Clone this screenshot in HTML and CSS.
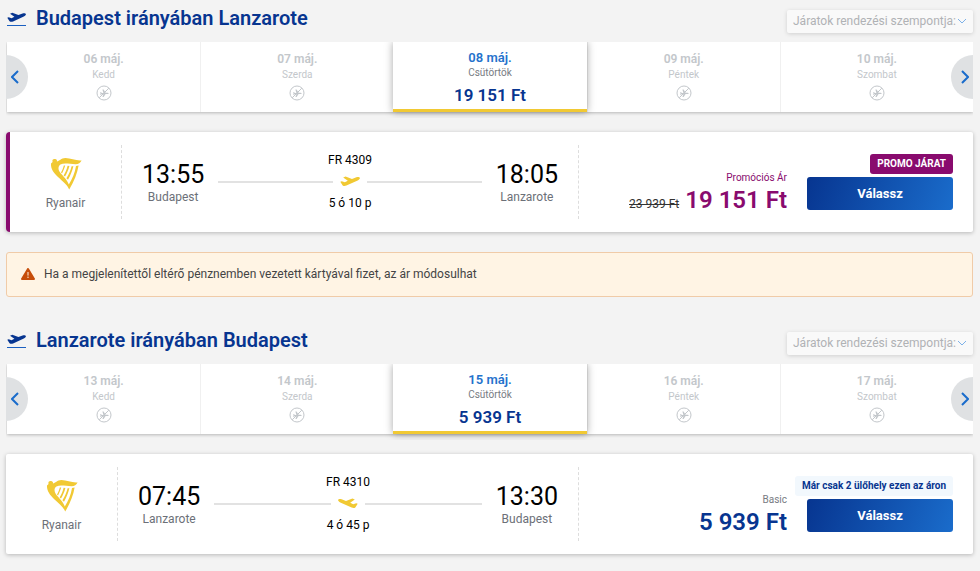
FILE: index.html
```
<!DOCTYPE html>
<html lang="hu">
<head>
<meta charset="UTF-8">
<meta name="viewport" content="width=device-width, initial-scale=1.0">
<title>Budapest - Lanzarote</title>
<link rel="stylesheet" href="styles.css">
</head>
<body>

<svg width="0" height="0" class="sprite" aria-hidden="true">
  <symbol id="plane" viewBox="0 0 20 12">
    <path d="M0.3 5.8 L1.8 5.2 L4.8 6.3 L7.8 4.8 L3.2 1.4 L5.6 0.6 L12 2.9 L16.4 1.2 C18 0.7 19.6 1 19.9 1.9 C20.1 2.8 19 3.9 17.7 4.5 L6.4 9.6 C5 10.1 3.6 10.2 2.7 9.4 Z"/>
  </symbol>
  <symbol id="harp" viewBox="0 0 32 34">
    <path d="M2.6 5 C1.8 3 3.2 1.6 5 2 C6.8 2.2 7.4 3.6 6.8 4.6 C9.4 4 11 1.2 15.4 1 C21 1 26 4 31.6 3.4 C30.4 5.8 28.6 7.2 25.6 7.2 C20 7.2 14.4 5.6 10.4 7.4 C8 9 8 12.4 9.8 15 C12.4 18.8 17.2 22.4 18.8 27.6 C22.2 22 25 15.6 26 9 L28.6 8.6 C27.4 16.2 24 24.8 19.2 32.6 C17.6 28 12.6 24.4 8 20 C4 16 0.6 12 1 6.4 Z"/>
    <path d="M13.8 8.4 L15.2 8.6 C14.4 11.6 13.4 13.8 12 16.4 L11 15.4 C12.4 13 13.2 11 13.8 8.4 Z M17.6 8.8 L19.4 9 C18.4 13 16.8 16.4 15 19.6 L13.6 18.4 C15.6 15.2 16.8 12.2 17.6 8.8 Z M21.6 9.2 L23.4 9.2 C22.4 13.6 20.4 18.4 18 22.8 L16.4 21.2 C19 17.2 20.6 13.4 21.6 9.2 Z"/>
  </symbol>
  <symbol id="no-flight" viewBox="0 0 16 16">
    <circle cx="8" cy="8" r="7" fill="none" stroke="currentColor"/>
    <path d="M3.2 12.8 L12.8 3.2" stroke="currentColor"/>
    <path d="M4 7.2 L5 7.2 L6 8 L7.4 8 L6.4 4.4 L7.6 4.4 L9.6 7.7 L11.6 7.7 C13 7.8 13 9 11.6 9.1 L9.6 9.1 L7.6 12 L6.4 12 L7.4 9 L6 9 L5 9.8 L4 9.8 L4.6 8.5 Z"/>
  </symbol>
  <symbol id="chevron" viewBox="0 0 8 14">
    <path d="M1 1 L7 7 L1 13" fill="none" stroke="currentColor" stroke-width="2"/>
  </symbol>
</svg>

<main>
  <section class="journey">
    <header class="journey-header">
      <h2>
        <span class="takeoff"><svg><use href="#plane"/></svg></span>
        Budapest irányában Lanzarote
      </h2>
      <div class="sort">
        <select aria-label="Járatok rendezése">
          <option>Járatok rendezési szempontja:</option>
        </select>
        <svg viewBox="0 0 10 6"><path d="M1 1 L5 5 L9 1"/></svg>
      </div>
    </header>

    <div class="dates">
      <button class="day" disabled><b>06 máj.</b><span>Kedd</span><svg><use href="#no-flight"/></svg></button>
      <button class="day" disabled><b>07 máj.</b><span>Szerda</span><svg><use href="#no-flight"/></svg></button>
      <button class="day selected"><b>08 máj.</b><span>Csütörtök</span><strong>19 151 Ft</strong></button>
      <button class="day" disabled><b>09 máj.</b><span>Péntek</span><svg><use href="#no-flight"/></svg></button>
      <button class="day" disabled><b>10 máj.</b><span>Szombat</span><svg><use href="#no-flight"/></svg></button>
      <button class="arrow prev" aria-label="Előző"><svg><use href="#chevron"/></svg></button>
      <button class="arrow next" aria-label="Következő"><svg><use href="#chevron"/></svg></button>
    </div>

    <article class="flight promo">
      <div class="airline">
        <svg><use href="#harp"/></svg>
        <span>Ryanair</span>
      </div>
      <div class="trip">
        <div class="stop"><time>13:55</time><span>Budapest</span></div>
        <div class="route">
          <span>FR 4309</span>
          <div class="track"><svg><use href="#plane"/></svg></div>
          <span>5 ó 10 p</span>
        </div>
        <div class="stop"><time>18:05</time><span>Lanzarote</span></div>
      </div>
      <div class="fare">
        <div class="price">
          <span class="fare-name">Promóciós Ár</span>
          <div class="amount"><del>23 939 Ft</del><strong>19 151 Ft</strong></div>
        </div>
        <div class="action">
          <span class="badge">PROMO JÁRAT</span>
          <button class="select">Válassz</button>
        </div>
      </div>
    </article>
  </section>

  <div class="notice">
    <svg viewBox="0 0 14 12">
      <path class="triangle" d="M7 1 L13 11 L1 11 Z"/>
      <path class="mark" d="M7 4 V7.6 M7 8.6 V10"/>
    </svg>
    <p>Ha a megjelenítettől eltérő pénznemben vezetett kártyával fizet, az ár módosulhat</p>
  </div>

  <section class="journey">
    <header class="journey-header">
      <h2>
        <span class="takeoff"><svg><use href="#plane"/></svg></span>
        Lanzarote irányában Budapest
      </h2>
      <div class="sort">
        <select aria-label="Járatok rendezése">
          <option>Járatok rendezési szempontja:</option>
        </select>
        <svg viewBox="0 0 10 6"><path d="M1 1 L5 5 L9 1"/></svg>
      </div>
    </header>

    <div class="dates">
      <button class="day" disabled><b>13 máj.</b><span>Kedd</span><svg><use href="#no-flight"/></svg></button>
      <button class="day" disabled><b>14 máj.</b><span>Szerda</span><svg><use href="#no-flight"/></svg></button>
      <button class="day selected"><b>15 máj.</b><span>Csütörtök</span><strong>5 939 Ft</strong></button>
      <button class="day" disabled><b>16 máj.</b><span>Péntek</span><svg><use href="#no-flight"/></svg></button>
      <button class="day" disabled><b>17 máj.</b><span>Szombat</span><svg><use href="#no-flight"/></svg></button>
      <button class="arrow prev" aria-label="Előző"><svg><use href="#chevron"/></svg></button>
      <button class="arrow next" aria-label="Következő"><svg><use href="#chevron"/></svg></button>
    </div>

    <article class="flight">
      <div class="airline">
        <svg><use href="#harp"/></svg>
        <span>Ryanair</span>
      </div>
      <div class="trip">
        <div class="stop"><time>07:45</time><span>Lanzarote</span></div>
        <div class="route">
          <span>FR 4310</span>
          <div class="track inbound"><svg><use href="#plane"/></svg></div>
          <span>4 ó 45 p</span>
        </div>
        <div class="stop"><time>13:30</time><span>Budapest</span></div>
      </div>
      <div class="fare">
        <div class="price">
          <span class="fare-name">Basic</span>
          <div class="amount"><strong>5 939 Ft</strong></div>
        </div>
        <div class="action">
          <span class="badge">Már csak 2 ülőhely ezen az áron</span>
          <button class="select">Válassz</button>
        </div>
      </div>
    </article>
  </section>
</main>

</body>
</html>
```
FILE: styles.css
```
* {
  box-sizing: border-box;
}
body {
  margin: 0;
  padding: 0 7px 16px 6px;
  background: #f3f3f3;
  color: #000;
  font-family: Roboto, "Liberation Sans", sans-serif;
  font-size: 12px;
  line-height: 16px;
}
button, select {
  font-family: inherit;
  border: none;
  margin: 0;
}
svg {
  display: block;
  fill: currentColor;
}
.sprite {
  position: absolute;
}

/* Title row */
.journey-header {
  display: flex;
  justify-content: space-between;
  height: 42px;
  margin-left: 1px;
}
h2 {
  display: flex;
  gap: 10px;
  margin: 6px 0 0;
  color: #073590;
  font-size: 20px;
  font-weight: 600;
  line-height: 24px;
}
.takeoff {
  width: 19px;
  height: 20px;
  padding-top: 6px;
  border-bottom: 1px solid #1a5fc0;
}
.takeoff svg {
  width: 19px;
  height: 12px;
}
.sort {
  position: relative;
  height: 23px;
  margin-top: 10px;
  border-radius: 2px;
  background: #f9f9f9;
  box-shadow: 0 1px 4px rgba(0, 0, 0, 0.15);
}
.sort select {
  appearance: none;
  height: 21px;
  padding: 0 17px 0 6px;
  background: none;
  color: #b0b2b5;
  font-size: 12px;
}
.sort svg {
  position: absolute;
  top: 8px;
  right: 6px;
  width: 10px;
  height: 6px;
  fill: none;
  stroke: #7db1e8;
  pointer-events: none;
}

/* Day strip */
.dates {
  position: relative;
  display: grid;
  grid-template-columns: repeat(5, 1fr);
  height: 70px;
  margin-left: 1px;
  background: #fff;
  box-shadow: 0 1px 3px rgba(0, 0, 0, 0.25);
  clip-path: inset(0 0 -6px -1px);
}
.day {
  display: flex;
  flex-direction: column;
  align-items: center;
  padding: 9px 0 0;
  border-left: 1px solid #f0f0f0;
  background: #fff;
  color: #c3c7cb;
  font-size: 10px;
  line-height: 16px;
}
.day b {
  font-size: 12px;
  font-weight: 600;
}
.day svg {
  width: 16px;
  height: 16px;
  margin-top: 2px;
}
.day:first-child {
  border-left: none;
}
.day.selected {
  z-index: 1;
  padding-top: 8px;
  border-left: none;
  border-bottom: 3px solid #f1c933;
  box-shadow: 0 0 8px rgba(0, 0, 0, 0.35);
  color: #777b82;
}
.day.selected b {
  color: #2472cc;
  font-size: 13px;
}
.day.selected span {
  line-height: 14px;
}
.day.selected strong {
  margin-top: 5px;
  color: #073590;
  font-size: 17px;
  font-weight: 600;
  line-height: 20px;
}
.arrow {
  position: absolute;
  top: 13px;
  display: flex;
  align-items: center;
  justify-content: center;
  width: 22px;
  height: 44px;
  padding: 0;
  background: #dfe1e3;
  color: #1a6ccb;
}
.arrow svg {
  width: 8px;
  height: 14px;
}
.prev {
  left: -1px;
  padding-right: 5px;
  border-radius: 0 22px 22px 0;
}
.prev svg {
  transform: scaleX(-1);
}
.next {
  right: 0;
  padding-left: 5px;
  border-radius: 22px 0 0 22px;
}

/* Flight card */
.flight {
  display: grid;
  grid-template-columns: 112px 1fr 394px;
  height: 100px;
  margin-top: 20px;
  padding: 13px 0;
  border-radius: 2px;
  background: #fff;
  box-shadow: 0 1px 4px rgba(0, 0, 0, 0.25);
}
.promo {
  border-left: 4px solid #890b6e;
  border-radius: 4px 2px 2px 4px;
}
.airline {
  display: flex;
  flex-direction: column;
  align-items: center;
  gap: 4px;
  padding-top: 12px;
  border-right: 1px dashed #ddd;
  color: #6c7078;
}
.airline svg {
  width: 32px;
  height: 34px;
  color: #f1c933;
}
.trip {
  display: flex;
  gap: 14px;
  padding: 0 20px;
  border-right: 1px dashed #ddd;
}
.stop {
  display: flex;
  flex-direction: column;
  align-items: center;
  padding-top: 15px;
  color: #6c7078;
}
.stop time {
  color: #000;
  font-size: 25px;
  line-height: 30px;
}
.stop span {
  line-height: 14px;
}
.route {
  flex: 1;
  display: flex;
  flex-direction: column;
  align-items: center;
  padding-top: 7px;
}
.track {
  display: flex;
  align-items: center;
  align-self: stretch;
  gap: 7px;
  height: 27px;
  color: #f1c933;
}
.track::before,
.track::after {
  content: "";
  flex: 1;
  height: 2px;
  background: #e2e2e2;
}
.track svg {
  width: 20px;
  height: 12px;
}
.inbound svg {
  transform: scaleX(-1);
}
.fare {
  display: flex;
  justify-content: flex-end;
  gap: 20px;
  padding-right: 20px;
}
.price {
  display: flex;
  flex-direction: column;
  align-items: flex-end;
  padding-top: 25px;
  color: #073590;
}
.fare-name {
  color: #777b82;
  font-size: 10px;
}
.amount {
  display: flex;
  align-items: baseline;
  gap: 6px;
}
.amount del {
  color: #333;
}
.amount strong {
  font-size: 24px;
  font-weight: 600;
  line-height: 28px;
}
.promo .price,
.promo .fare-name {
  color: #890b6e;
}
.action {
  display: flex;
  flex-direction: column;
  align-items: flex-end;
  gap: 3px;
  width: 146px;
  padding-top: 9px;
}
.badge {
  padding: 2px 7px;
  border-radius: 3px;
  background: #f2f8fd;
  color: #073590;
  font-size: 10px;
  font-weight: 700;
  white-space: nowrap;
}
.promo .badge {
  background: #890b6e;
  color: #fff;
}
.select {
  width: 100%;
  height: 33px;
  border-radius: 3px;
  background: linear-gradient(110deg, #073590, #1a6ccb);
  color: #fff;
  font-size: 13px;
  font-weight: 700;
}

/* Currency notice */
.notice {
  display: flex;
  align-items: center;
  gap: 9px;
  height: 45px;
  margin: 20px 0 25px;
  padding: 0 14px 2px;
  border: 1px solid #f0cba8;
  border-radius: 3px;
  background: #fff4e4;
  color: #444;
}
.notice svg {
  width: 14px;
  height: 12px;
}
.notice p {
  margin: 0;
}
.triangle {
  fill: #c64d0a;
  stroke: #c64d0a;
  stroke-width: 2;
  stroke-linejoin: round;
}
.mark {
  stroke: #fff4e4;
}
```
